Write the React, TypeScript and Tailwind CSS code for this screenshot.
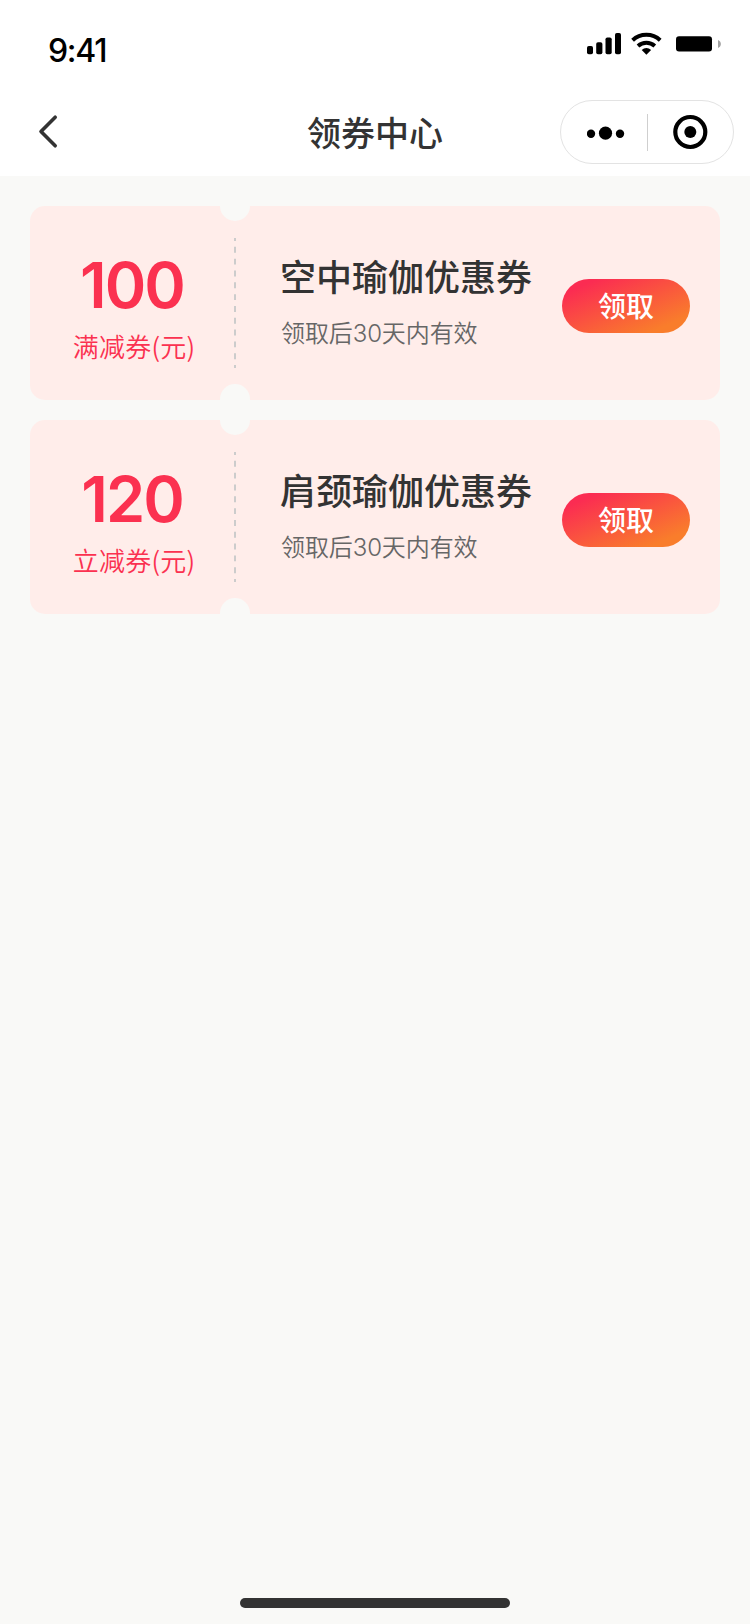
type Coupon = {
  amount: string;
  kind: string;
  title: string;
  note: string;
};

const coupons: Coupon[] = [
  { amount: "100", kind: "满减券(元)", title: "空中瑜伽优惠券", note: "领取后30天内有效" },
  { amount: "120", kind: "立减券(元)", title: "肩颈瑜伽优惠券", note: "领取后30天内有效" },
];

function StatusBar() {
  return (
    <div className="flex h-[88px] items-start justify-between pl-12 pr-[29px]">
      <span className="mt-[31px] font-['Inter',sans-serif] text-[32px] font-medium leading-10 tracking-[-1.3px] text-black">9:41</span>
      <div className="mt-8 flex items-start">
        {/* Signal */}
        <svg width="34" height="24" viewBox="0 0 34 24" className="mr-2.5">
          <rect x="0" y="14" width="6" height="8.3" rx="1.8" />
          <rect x="9.2" y="10.2" width="6.2" height="12.1" rx="1.8" />
          <rect x="18.5" y="5.5" width="6.2" height="16.8" rx="1.8" />
          <rect x="28" y="1" width="6" height="21.3" rx="1.8" />
        </svg>
        {/* Wifi */}
        <svg width="31" height="24" viewBox="0 0 31 24" className="mr-3.5" fill="none" stroke="black" strokeWidth="4">
          <path d="M1.6 8.2C9.3 1 21.5 1 29.2 8.2" />
          <path d="M7 13.9C11.9 9.6 18.9 9.6 23.8 13.9" />
          <path d="M10.7 18.1C13.5 15.3 17.3 15.3 20.1 18.1L15.4 22.8Z" fill="black" stroke="none" />
        </svg>
        {/* Battery */}
        <svg width="45" height="24" viewBox="0 0 45 24">
          <rect x="0" y="4.3" width="36" height="15.2" rx="3" />
          <path d="M42 8v8c1.7-.7 2.9-2.2 2.9-4s-1.2-3.3-2.9-4Z" fill="#a3a3a3" />
        </svg>
      </div>
    </div>
  );
}

function NavBar() {
  return (
    <div className="grid h-[88px] grid-cols-[1fr_auto_1fr] items-center pl-[38px] pr-4">
      <svg width="20" height="36" viewBox="0 0 20 36" fill="none" stroke="#333" strokeWidth="3.6" strokeLinecap="round" strokeLinejoin="round">
        <path d="M17.200 3.200 3 17.400l14.200 14.400" />
      </svg>
      <h1 className="-ml-[22px] -mt-px text-[34px] font-medium leading-[48px]">领券中心</h1>
      <div className="flex h-16 w-[174px] items-center justify-self-end rounded-full border border-[#e3e3e3]">
        <svg width="38" height="14" viewBox="0 0 38 14" className="ml-[26px] mt-px">
          <circle cx="4" cy="7.7" r="4.2" />
          <circle cx="18.5" cy="7.2" r="6.6" />
          <circle cx="33" cy="7.7" r="4.2" />
        </svg>
        <div className="ml-[22px] h-[37px] w-px bg-[#cfcfcf]" />
        <svg width="36" height="36" viewBox="0 0 36 36" className="ml-[25px]">
          <circle cx="17.3" cy="18" r="15" fill="none" stroke="black" strokeWidth="4.2" />
          <circle cx="17.3" cy="18" r="6" />
        </svg>
      </div>
    </div>
  );
}

function CouponCard({ amount, kind, title, note }: Coupon) {
  return (
    <li className="relative flex h-[194px] overflow-hidden rounded-[15px] bg-[#ffedea]">
      <div className="flex w-[204px] flex-col items-center pt-[46px] text-[#fb3150]">
        <span className="font-['Inter',sans-serif] text-[63px] font-semibold leading-[66px] tracking-[-2px]">{amount}</span>
        <span className="ml-1 mt-2.5 text-[26px] font-[350] leading-9 tracking-[0.2px]">{kind}</span>
      </div>
      <svg width="2" height="130" viewBox="0 0 2 130" className="mt-8">
        <line x1="1" y1="0" x2="1" y2="130" stroke="#ccc" strokeWidth="2" strokeDasharray="5.91" strokeDashoffset="2.95" />
      </svg>
      <div className="flex flex-1 flex-col pl-11 pt-11">
        <span className="text-[36px] font-medium leading-[50px]">{title}</span>
        <span className="mt-[17px] pl-px font-['Inter','Noto_Sans_CJK_SC',sans-serif] text-[24px] font-[350] leading-[34px] tracking-[-0.1px] text-[#666]">{note}</span>
      </div>
      <button className="mr-[30px] mt-[73px] h-[54px] w-32 rounded-full bg-[linear-gradient(157deg,#fb2c52_14%,#f97d2b_84%)] pb-0.5 text-[28px] font-medium leading-[52px] text-white">
        领取
      </button>
      {/* Ticket notches */}
      <div className="absolute -top-[15px] left-[190px] size-[30px] rounded-full bg-[#f9f9f7]" />
      <div className="absolute -bottom-[14px] left-[190px] size-[30px] rounded-full bg-[#f9f9f7]" />
    </li>
  );
}

export default function App() {
  return (
    <div className="flex h-[1624px] w-[750px] flex-col bg-[#f9f9f7] font-['Noto_Sans_CJK_SC',sans-serif] text-[#333]" lang="zh-CN">
      <header className="bg-white">
        <StatusBar />
        <NavBar />
      </header>
      <ul className="flex flex-1 flex-col gap-5 px-[30px] pt-[30px]">
        {coupons.map((c) => (
          <CouponCard key={c.amount} {...c} />
        ))}
      </ul>
      <div className="mx-auto mb-4 h-2.5 w-[270px] rounded-full bg-[#333]" />
    </div>
  );
}
